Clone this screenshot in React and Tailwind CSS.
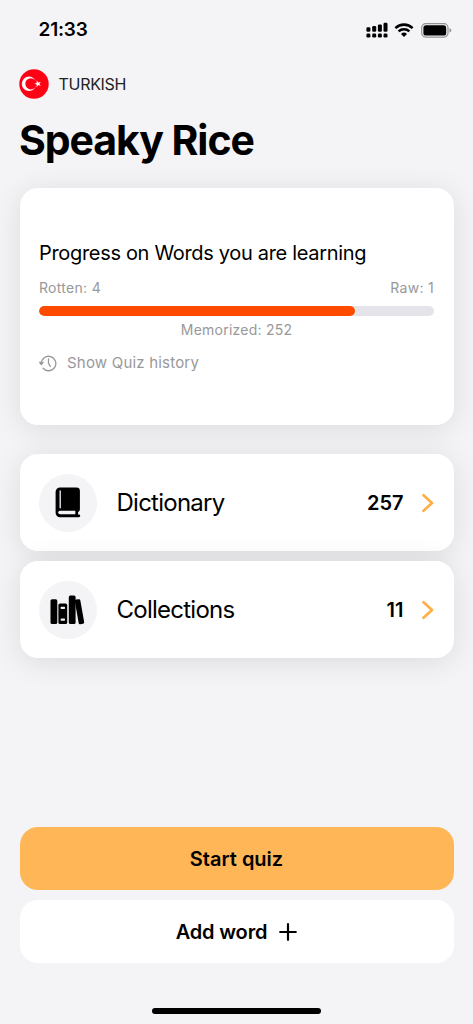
// App.jsx

import React from 'react';

const words = { rotten: 4, raw: 1, memorized: 252, progress: 80 };

const SignalIcon = () => (
  <svg className="w-[22px] h-4" viewBox="0 0 22 16" fill="#000">
    <rect x="0.4" y="5.2" width="4" height="4.6" rx="1.2" />
    <rect x="6.2" y="4" width="4" height="5.8" rx="1.2" />
    <rect x="11.9" y="2.4" width="4" height="7.4" rx="1.2" />
    <rect x="17.5" y="0.8" width="4" height="9" rx="1.2" />
    <rect x="0.4" y="11.6" width="4" height="4" rx="1.3" />
    <rect x="6.2" y="11.6" width="4" height="4" rx="1.3" />
    <rect x="11.9" y="11.6" width="4" height="4" rx="1.3" />
    <rect x="17.5" y="11.6" width="4" height="4" rx="1.3" />
  </svg>
);

const WifiIcon = () => (
  <svg className="w-5 h-[14px]" viewBox="0 0 20 14" fill="none" stroke="#000" strokeWidth="2.6">
    <path d="M1.4 5.1a12.4 12.4 0 0 1 17.2 0" />
    <path d="M4.6 8.4a7.9 7.9 0 0 1 10.8 0" />
    <path d="M10 14l-3-3.1a4.5 4.5 0 0 1 6 0z" fill="#000" stroke="none" />
  </svg>
);

const BatteryIcon = () => (
  <svg className="w-[31px] h-[15px]" viewBox="0 0 31 15">
    <rect x="0.7" y="0.7" width="26.3" height="13.4" rx="4" fill="none" stroke="#000" strokeOpacity="0.4" strokeWidth="1.2" />
    <rect x="2.4" y="2.3" width="22.8" height="10.2" rx="2.6" fill="#000" />
    <path d="M28.5 5.2c1.1.4 1.8 1.2 1.8 2.2s-.7 1.8-1.8 2.2z" fill="#000" fillOpacity="0.4" />
  </svg>
);

const TurkishFlag = () => (
  <svg className="w-[30px] h-[30px]" viewBox="0 0 30 30">
    <circle cx="15" cy="15" r="14.7" fill="#ff0014" />
    <circle cx="10" cy="14.8" r="7.2" fill="#fff" />
    <circle cx="11.9" cy="14.8" r="5.6" fill="#ff0014" />
    <path d="M15.3 14.8l2.4-.8v-2.6l1.6 2.1 2.5-.8-1.4 2.1 1.4 2.1-2.5-.8-1.6 2.1v-2.6z" fill="#fff" />
  </svg>
);

const HistoryIcon = () => (
  <svg className="w-[18px] h-[17px]" viewBox="0 0 18 17" fill="none" stroke="#98989b" strokeWidth="1.3" strokeLinecap="round" strokeLinejoin="round">
    <path d="M2.3 8.4a7.25 7.25 0 1 1 1.8 4.9" />
    <path d="M0.7 7.3h3.4L2.3 9.5z" fill="#98989b" />
    <path d="M9.5 4v4.4l1.9 3" />
  </svg>
);

const BookIcon = () => (
  <svg className="w-[26px] h-[31px]" viewBox="0 0 26 31">
    <path d="M5 0.5h16.5a3.4 3.4 0 0 1 3.4 3.4v18.2a3 3 0 0 1-1.8 2.8v2.6h0.8a1.3 1.3 0 0 1 0 2.7H5a4.4 4.4 0 0 1-4.4-4.4V4.9A4.4 4.4 0 0 1 5 .5z" fill="#000" />
    <path d="M5.2 4v16.8" stroke="#f4f4f7" strokeWidth="1.3" strokeLinecap="round" />
    <path d="M5 23.7h15.3v3.6H5a1.8 1.8 0 0 1 0-3.6z" fill="#f4f4f7" />
  </svg>
);

const BooksIcon = () => (
  <svg className="w-[35px] h-[30px]" viewBox="0 0 35 30" fill="#000">
    <rect x="0.5" y="4.2" width="6.8" height="24.8" rx="1.6" />
    <rect x="8.4" y="8.6" width="8.8" height="20.4" rx="1.6" />
    <rect x="10.6" y="11.8" width="4.4" height="2.2" rx="0.8" fill="#f4f4f7" />
    <rect x="10.6" y="23.6" width="4.4" height="2.2" rx="0.8" fill="#f4f4f7" />
    <rect x="18.8" y="0.5" width="6.8" height="28.5" rx="1.6" />
    <rect x="26.7" y="4.2" width="5.6" height="25" rx="1.5" transform="rotate(-10 29.5 16.7)" />
  </svg>
);

const ChevronIcon = () => (
  <svg className="w-3 h-5" viewBox="0 0 12 20" fill="none" stroke="#ffae45" strokeWidth="2.6" strokeLinecap="round" strokeLinejoin="round">
    <path d="M1.5 2.2l8.5 7.8-8.5 7.8" />
  </svg>
);

const MenuRow = ({ icon, label, count }) => (
  <button className="flex w-full h-[97px] items-center rounded-[18px] bg-white pl-[19px] pr-5 shadow-[0_4px_30px_rgba(0,0,0,0.1)]">
    <span className="flex w-[58px] h-[58px] items-center justify-center rounded-full bg-[#f4f4f7]">
      {icon}
    </span>
    <span className="ml-5 text-2xl tracking-[-0.75px]">{label}</span>
    <span className="ml-auto mr-[18px] text-xl font-semibold">{count}</span>
    <ChevronIcon />
  </button>
);

const App = () => {
  return (
    <div className="flex flex-col w-full h-[1024px] overflow-hidden bg-[#f4f4f7] px-[19.5px] font-['Inter',sans-serif] text-black">
      {/* Status bar */}
      <div className="flex h-[60px] items-center justify-between pl-[19px] pr-[1.5px]">
        <span className="pt-px text-[19px] font-semibold tracking-[-0.2px]">21:33</span>
        <div className="flex items-center">
          <SignalIcon />
          <span className="ml-[6px] mr-[7px]"><WifiIcon /></span>
          <BatteryIcon />
        </div>
      </div>

      {/* Language and title */}
      <div className="-ml-[0.5px] mt-[9px] flex h-[30px] items-center">
        <TurkishFlag />
        <span className="ml-[9.5px] text-base tracking-[-0.3px] text-[#222]">TURKISH</span>
      </div>
      <h1 className="-ml-[0.5px] mt-[16px] h-[50px] text-[41px] leading-[50px] font-bold tracking-[-1.05px]">Speaky Rice</h1>

      {/* Progress card */}
      <div className="mt-[23px] h-[237px] shrink-0 rounded-[18px] bg-white px-[19.5px] pt-[52px] shadow-[0_4px_30px_rgba(0,0,0,0.1)]">
        <h2 className="text-xl leading-[26px] tracking-[-0.32px]">Progress on Words you are learning</h2>
        <div className="mt-[12px] flex justify-between text-sm leading-5 tracking-[0.3px] text-[#98989b]">
          <span>Rotten: {words.rotten}</span>
          <span>Raw: {words.raw}</span>
        </div>
        <div className="mt-2 h-[10px] overflow-hidden rounded-full bg-[#e4e4ea]">
          <div className="h-full rounded-full bg-[#ff4b00]" style={{ width: `${words.progress}%` }} />
        </div>
        <p className="mt-[4px] text-center text-sm leading-5 tracking-[0.23px] text-[#98989b]">Memorized: {words.memorized}</p>
        <button className="mt-[13px] flex h-5 items-center text-[15px] tracking-[0.2px] text-[#98989b]">
          <HistoryIcon />
          <span className="ml-[10px]">Show Quiz history</span>
        </button>
      </div>

      <div className="mt-[29px] flex flex-col gap-[10px]">
        <MenuRow icon={<BookIcon />} label="Dictionary" count={257} />
        <MenuRow icon={<BooksIcon />} label="Collections" count={11} />
      </div>

      {/* Bottom actions */}
      <div className="mt-auto flex flex-col gap-[10px] text-xl font-semibold">
        <button className="h-[63px] rounded-[18px] bg-[#ffb657]">Start quiz</button>
        <button className="flex h-[63px] items-center justify-center rounded-[18px] bg-white tracking-[-0.15px]">
          Add word
          <svg className="ml-3 w-[18px] h-[18px]" viewBox="0 0 18 18" stroke="#000" strokeWidth="2.2" strokeLinecap="round">
            <path d="M9 1.2v15.6M1.2 9h15.6" />
          </svg>
        </button>
      </div>
      <div className="mx-auto mt-[45px] mb-[10px] h-[6px] w-[169px] rounded-full bg-black" />
    </div>
  );
};

export default App;
